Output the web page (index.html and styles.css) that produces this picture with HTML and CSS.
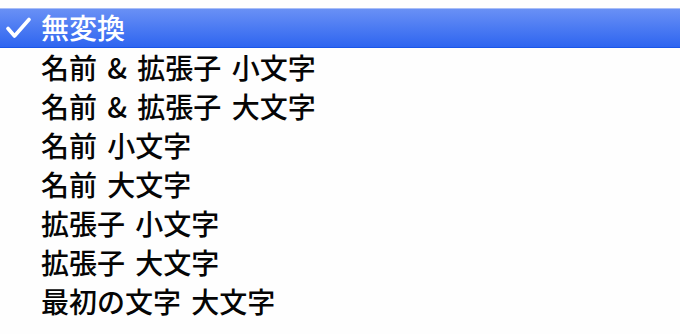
FILE: index.html
```html
<!DOCTYPE html>
<html lang="ja">
<head>
<meta charset="utf-8">
<link rel="stylesheet" href="styles.css">
</head>
<body>
<ul class="menu">
  <li class="item selected">
    <span class="mark"><svg width="26" height="22" viewBox="0 0 26 22"><path d="M2 11.5 L8.5 19 L23 2.5" fill="none" stroke="#fff" stroke-width="3.6" stroke-linecap="round" stroke-linejoin="round"/></svg></span>
    <span class="label">無変換</span>
  </li>
  <li class="item"><span class="mark"></span><span class="label">名前 &amp; 拡張子 小文字</span></li>
  <li class="item"><span class="mark"></span><span class="label">名前 &amp; 拡張子 大文字</span></li>
  <li class="item"><span class="mark"></span><span class="label">名前 小文字</span></li>
  <li class="item"><span class="mark"></span><span class="label">名前 大文字</span></li>
  <li class="item"><span class="mark"></span><span class="label">拡張子 小文字</span></li>
  <li class="item"><span class="mark"></span><span class="label">拡張子 大文字</span></li>
  <li class="item"><span class="mark"></span><span class="label">最初の文字 大文字</span></li>
</ul>
</body>
</html>
```
FILE: styles.css
```css
html, body {
  margin: 0;
  padding: 0;
  background: #fefefe;
}
body {
  width: 680px;
  height: 334px;
  overflow: hidden;
  font-family: "Noto Sans CJK JP", "Noto Sans", sans-serif;
}
.menu {
  list-style: none;
  margin: 0;
  padding: 8px 0 0 0;
}
.item {
  display: flex;
  align-items: center;
  height: 39px;
  font-size: 28px;
  font-weight: 500;
  line-height: 1;
  color: #050505;
  word-spacing: 4px;
}
.item.selected {
  height: 38px;
  border-top: 1px solid #a9bef6;
  border-bottom: 1px solid #1a56e9;
  background: linear-gradient(#6990f5, #2e65f0);
  color: #fff;
}
.mark {
  display: flex;
  align-items: center;
  width: 35px;
  padding-left: 6px;
  flex-shrink: 0;
}
.label {
  white-space: pre;
  padding-bottom: 2px;
}
```
